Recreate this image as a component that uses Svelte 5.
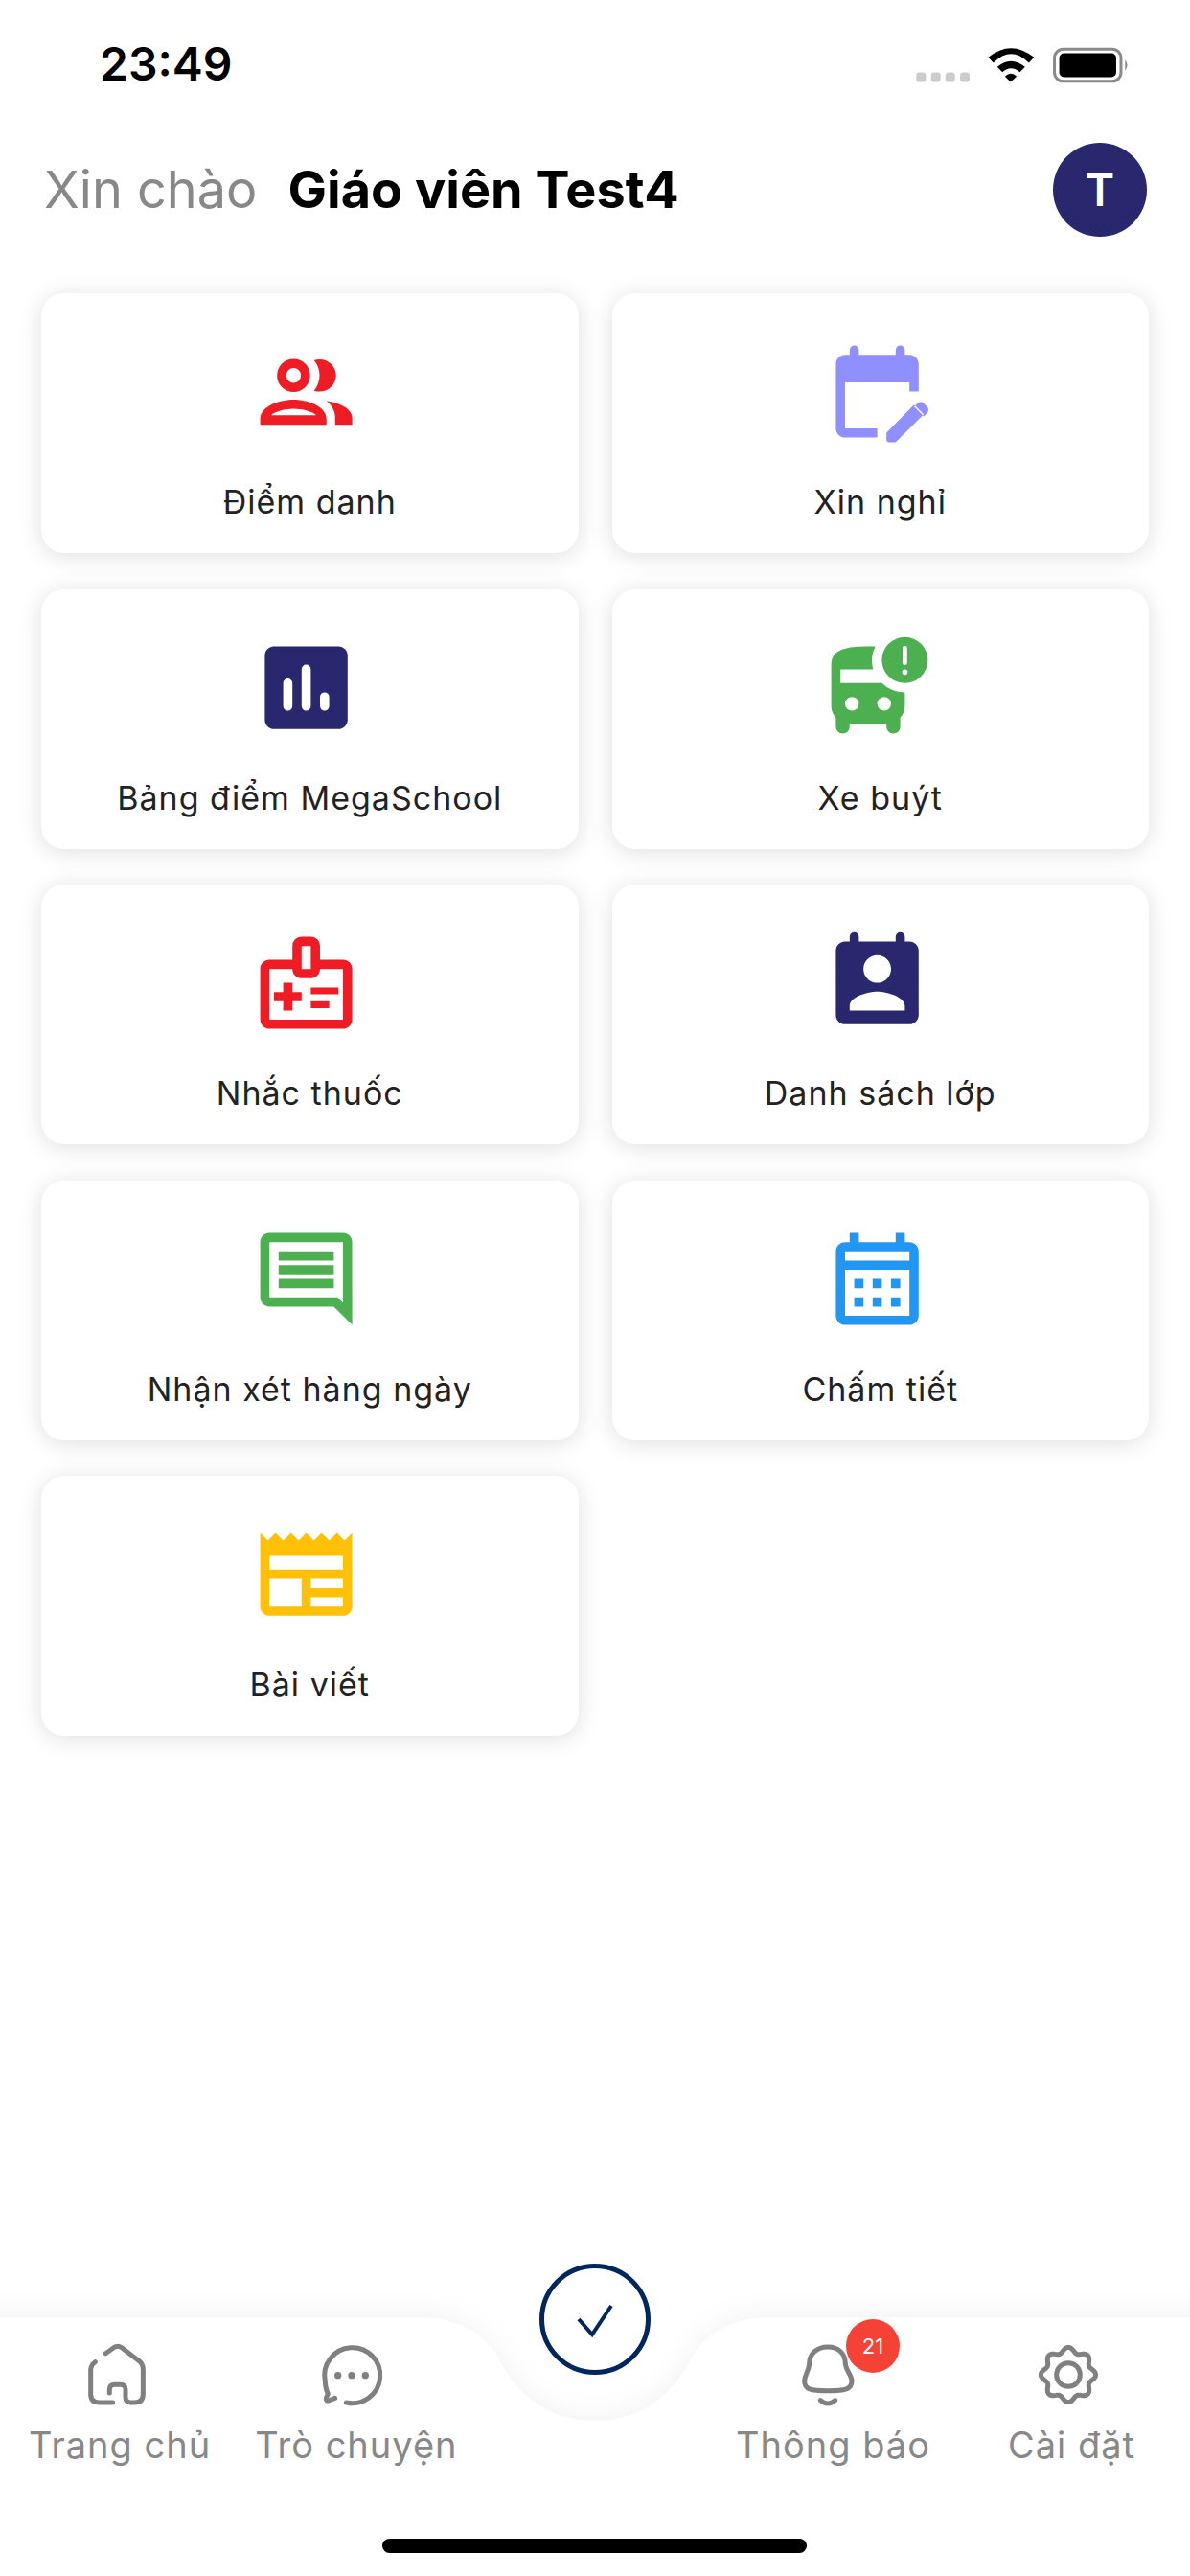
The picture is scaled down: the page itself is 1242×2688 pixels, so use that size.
<script>
  // Menu tiles: svg path per icon, drawn on a 24 unit box
  const tiles = [
    { label: "Điểm danh", color: "#ee1c25", icon: "people" },
    { label: "Xin nghỉ", color: "#8f8fff", icon: "edit" },
    { label: "Bảng điểm MegaSchool", color: "#29286f", icon: "chart" },
    { label: "Xe buýt", color: "#4caf50", icon: "bus" },
    { label: "Nhắc thuốc", color: "#ee1c25", icon: "medical" },
    { label: "Danh sách lớp", color: "#29286f", icon: "contact" },
    { label: "Nhận xét hàng ngày", color: "#4caf50", icon: "notes" },
    { label: "Chấm tiết", color: "#2196f3", icon: "calendar" },
    { label: "Bài viết", color: "#ffc107", icon: "news" },
  ];

  const icons = {
    people:
      "M9.25 4.9a3.6 3.6 0 1 0 0 7.2a3.6 3.6 0 1 0 0-7.2zM9.25 6.9a1.6 1.6 0 1 1 0 3.2a1.6 1.6 0 1 1 0-3.2zM14.9 5c2 0 3.6 1.6 3.6 3.5s-1.6 3.5-3.6 3.5c-.4 0-.8-.1-1.2-.2c.8-1 1.2-2.1 1.2-3.3s-.4-2.4-1.2-3.3c.4-.1.8-.2 1.2-.2zM9.25 13.75c-2.8 0-7.25 1.3-7.25 4.2v1.25h14.4v-1.25c0-2.9-4.4-4.2-7.15-4.2zM4.4 17.15c.7-.8 3-1.4 4.85-1.4s4.2.6 4.9 1.4zM16.4 14c2.5.4 5.6 1.5 5.6 3.8v1.4h-3.7v-1.6c0-1.4-.8-2.7-1.9-3.6z",
    edit:
      "M5 10h14v2h2V6c0-1.1-.9-2-2-2h-1V3a1 1 0 0 0-2 0v1H8V3a1 1 0 0 0-2 0v1H5C3.89 4 3.01 4.9 3.01 6L3 20c0 1.1.89 2 2 2h7v-2H5V10zM22.84 15.28l-.71-.71c-.39-.39-1.02-.39-1.41 0l-.71.71 2.12 2.12.71-.71c.39-.38.39-1.02 0-1.41zM14 20.94V22.4c0 .4.2.6.6.6h1.2c.2 0 .3-.1.4-.2l5.92-5.86-2.12-2.12L14 20.94z",
    chart:
      "M5 3h14c1.1 0 2 .9 2 2v14c0 1.1-.9 2-2 2H5c-1.1 0-2-.9-2-2V5c0-1.1.9-2 2-2zM8 10a1 1 0 0 0-1 1v5a1 1 0 0 0 2 0v-5a1 1 0 0 0-1-1zM12 7a1 1 0 0 0-1 1v8a1 1 0 0 0 2 0V8a1 1 0 0 0-1-1zM16 13a1 1 0 0 0-1 1v2a1 1 0 0 0 2 0v-2a1 1 0 0 0-1-1z",
    bus:
      "M11.6 3H10C5.6 3 2 3.5 2 7V16C2 17 2.4 17.9 3 18.5V20.5a1.5 1.5 0 0 0 3 0V20H14V20.5a1.5 1.5 0 0 0 3 0V18.5C17.6 17.9 18 17 18 16V13A7 7 0 0 1 13 11H4V8H11.1A7 7 0 0 1 11.6 3ZM6.5 14a1.5 1.5 0 1 1 0 3a1.5 1.5 0 1 1 0-3zM13.5 14a1.5 1.5 0 1 1 0 3a1.5 1.5 0 1 1 0-3zM18 1a5 5 0 1 0 0 10a5 5 0 1 0 0-10zM17.5 3.4a.5 .5 0 0 1 1 0V6.6a.5 .5 0 0 1-1 0zM18 8a.6 .6 0 1 1 0 1.2a.6 .6 0 1 1 0-1.2z",
    medical:
      "M20 7h-5V4c0-1.1-.9-2-2-2h-2C9.9 2 9 2.9 9 4v3H4c-1.1 0-2 .9-2 2v11c0 1.1.9 2 2 2h16c1.1 0 2-.9 2-2V9c0-1.1-.9-2-2-2zM11 4h2v5h-2V4zm9 16H4V9h5c0 1.1.9 2 2 2h2c1.1 0 2-.9 2-2h5v11zm-9-4H9v2H7v-2H5v-2h2v-2h2v2h2v2zm2-1.5V13h6v1.5h-6zm0 3V16h4v1.5h-4z",
    contact:
      "M19 3h-1V2a1 1 0 0 0-2 0v1H8V2a1 1 0 0 0-2 0v1H5c-1.11 0-2 .9-2 2v14c0 1.1.89 2 2 2h14c1.1 0 2-.9 2-2V5c0-1.1-.9-2-2-2zm-7 3c1.66 0 3 1.34 3 3s-1.34 3-3 3-3-1.34-3-3 1.34-3 3-3zm6 12H6v-1c0-2 4-3.1 6-3.1s6 1.1 6 3.1v1z",
    notes:
      "M21.99 4c0-1.1-.89-2-1.99-2H4c-1.1 0-2 .9-2 2v12c0 1.1.9 2 2 2h14l4 4-.01-18zM20 4v13.17L18.83 16H4V4h16zM6 12h12v2H6zm0-3h12v2H6zm0-3h12v2H6z",
    calendar:
      "M19 4h-1V2h-2v2H8V2H6v2H5c-1.11 0-1.99.9-1.99 2L3 20c0 1.1.89 2 2 2h14c1.1 0 2-.9 2-2V6c0-1.1-.9-2-2-2zm0 16H5V10h14v10zm0-12H5V6h14v2zM9 14H7v-2h2v2zm4 0h-2v-2h2v2zm4 0h-2v-2h2v2zm-8 4H7v-2h2v2zm4 0h-2v-2h2v2zm4 0h-2v-2h2v2z",
    news:
      "M22 3l-1.67 1.67L18.67 3 17 4.67 15.33 3l-1.66 1.67L12 3l-1.67 1.67L8.67 3 7 4.67 5.33 3 3.67 4.67 2 3v16c0 1.1.9 2 2 2h16c1.1 0 2-.9 2-2V3zM11 19H4v-6h7v6zm9 0h-7v-2h7v2zm0-4h-7v-2h7v2zm0-4H4V8h16v3z",
  };

  // gear outline: wavy ring with 8 lobes around (900,205)
  let gear = "";
  for (let i = 0; i < 96; i++) {
    const a = (i / 96) * Math.PI * 2;
    const r = 78 + 8 * Math.cos(8 * a);
    gear += (i ? "L" : "M") + (900 + r * Math.cos(a)).toFixed(1) + " " + (205 + r * Math.sin(a)).toFixed(1);
  }
  gear += "Z";
</script>

<div class="page">
  <div class="status">
    <span class="time">23:49</span>
    <svg class="status-icons" viewBox="40 50 680 125" aria-hidden="true">
      <rect x="50" y="135" width="30" height="30" rx="10" fill="#ccc" />
      <rect x="96" y="135" width="30" height="30" rx="10" fill="#ccc" />
      <rect x="141" y="135" width="30" height="30" rx="10" fill="#ccc" />
      <rect x="187" y="135" width="30" height="30" rx="10" fill="#ccc" />
      <path d="M275 88Q346 30 418 88L402 105Q346 50 291 105Z" />
      <path d="M303 118Q346 82 390 118L374 134Q346 110 319 134Z" />
      <path d="M327 148Q346 130 364 148L345 165Z" />
      <rect x="482" y="62" width="208" height="101" rx="28" fill="none" stroke="#8a8a8a" stroke-width="9" />
      <rect x="497" y="75" width="178" height="75" rx="15" />
      <path d="M703 95Q716 112 703 130Z" fill="#8a8a8a" />
    </svg>
  </div>

  <header class="header">
    <div class="greeting">
      <span class="hello">Xin chào</span>
      <span class="name">Giáo viên Test4</span>
    </div>
    <div class="avatar">T</div>
  </header>

  <main class="grid">
    {#each tiles as tile}
      <div class="tile">
        <svg class="tile-icon" viewBox="0 0 24 24" aria-hidden="true">
          <path d={icons[tile.icon]} fill={tile.color} fill-rule="evenodd" />
        </svg>
        <span class="tile-label">{tile.label}</span>
      </div>
    {/each}
  </main>

  <nav class="nav">
    <svg class="nav-bg" viewBox="0 0 1242 270" aria-hidden="true">
      <path d="M-40 0H436C475 0 505 15 520 42C535 72 565 108 621 108C677 108 707 72 722 42C737 15 767 0 806 0H1282V310H-40Z" fill="#fff" />
    </svg>

    <div class="check">
      <svg viewBox="0 0 60 60" aria-hidden="true">
        <path d="M13 30L27 46L47 16" fill="none" stroke="#00275d" stroke-width="4" stroke-linejoin="miter" />
      </svg>
    </div>

    <div class="nav-left">
      <div class="nav-item">
        <svg class="nav-icon shifted" viewBox="30 40 210 210" aria-hidden="true">
          <path d="M100 78L125 60Q137 52 150 60L205 102Q217 112 217 128V205Q217 232 190 232H178Q162 232 162 215V192Q162 176 146 176H128Q112 176 112 192V202M122 232H80Q53 232 53 205V130Q53 115 67 105" />
        </svg>
        <span class="nav-label">Trang chủ</span>
      </div>
      <div class="nav-item">
        <svg class="nav-icon shifted" viewBox="800 40 210 210" aria-hidden="true">
          <path d="M885 232A87 87 0 1 0 819 165Q820 190 828 205Q815 228 830 226L850 218" />
          <circle class="dot" cx="859" cy="147" r="11" />
          <circle class="dot" cx="902" cy="147" r="11" />
          <circle class="dot" cx="945" cy="147" r="11" />
        </svg>
        <span class="nav-label">Trò chuyện</span>
      </div>
    </div>

    <div class="nav-right">
      <div class="nav-item">
        <svg class="nav-icon" viewBox="40 100 210 210" aria-hidden="true">
          <path d="M130 118C95 118 72 140 72 170C72 190 57 205 57 225C57 250 75 255 130 255C185 255 205 250 205 225C205 205 185 190 185 170C185 140 165 118 130 118Z" />
          <path d="M107 285Q130 305 153 285" />
        </svg>
        <span class="badge">21</span>
        <span class="nav-label">Thông báo</span>
      </div>
      <div class="nav-item">
        <svg class="nav-icon shifted" viewBox="795 100 210 210" aria-hidden="true">
          <path d={gear} />
          <circle cx="900" cy="205" r="37" />
        </svg>
        <span class="nav-label">Cài đặt</span>
      </div>
    </div>

    <div class="home-bar"></div>
  </nav>
</div>

<style>
  :global(body) {
    margin: 0;
    background: #fff;
  }

  .page {
    width: 1242px;
    height: 2688px;
    display: flex;
    flex-direction: column;
    overflow: hidden;
    background: #fff;
    font-family: Inter, "Noto Sans", sans-serif;
  }

  /* --- status bar --- */
  .status {
    display: flex;
    justify-content: space-between;
    align-items: flex-start;
    box-sizing: border-box;
    height: 100px;
    padding: 47px 62px 0 104px;
  }

  .time {
    font-size: 48px;
    line-height: 40px;
    font-weight: 600;
    color: #000;
  }

  .status-icons {
    width: 227px;
    height: 42px;
  }

  /* --- greeting --- */
  .header {
    display: flex;
    justify-content: space-between;
    align-items: center;
    height: 99px;
    margin-top: 48px;
    padding: 0 45px 0 46px;
  }

  .greeting {
    display: flex;
    gap: 32px;
    font-size: 54px;
    line-height: 64px;
  }

  .hello {
    color: #888;
  }

  .name {
    color: #000;
    font-weight: 700;
  }

  .avatar {
    width: 98px;
    height: 98px;
    border-radius: 50%;
    background: #29286f;
    color: #fff;
    font-size: 46px;
    font-weight: 600;
    display: flex;
    align-items: center;
    justify-content: center;
  }

  /* --- tiles --- */
  .grid {
    display: grid;
    grid-template-columns: 1fr 1fr;
    grid-auto-rows: 271px;
    gap: 37.5px 35px;
    padding: 59px 43px 0;
  }

  .tile {
    display: flex;
    flex-direction: column;
    align-items: center;
    box-sizing: border-box;
    padding-top: 45px;
    background: #fff;
    border-radius: 24px;
    box-shadow: 0 3px 24px rgba(0, 0, 0, 0.13);
  }

  .tile-icon {
    width: 115.2px;
    height: 115.2px;
    margin-right: 7px;
    flex: none;
  }

  .tile-label {
    margin-top: 38px;
    font-size: 34px;
    line-height: 40px;
    letter-spacing: 1px;
    color: #222;
  }

  /* --- bottom navigation --- */
  .nav {
    position: relative;
    display: flex;
    justify-content: space-between;
    align-items: flex-start;
    box-sizing: border-box;
    height: 270px;
    margin-top: auto;
    padding: 25px 57px 0 30px;
  }

  .nav-bg {
    position: absolute;
    left: 0;
    top: 0;
    width: 1242px;
    height: 270px;
    overflow: visible;
    filter: drop-shadow(0 -3px 14px rgba(0, 0, 0, 0.05));
  }

  .check {
    position: absolute;
    left: 563px;
    top: -56px;
    box-sizing: border-box;
    width: 116px;
    height: 116px;
    border: 5px solid #00275d;
    border-radius: 50%;
    background: #fff;
    display: flex;
    align-items: center;
    justify-content: center;
  }

  .check svg {
    width: 60px;
    height: 60px;
  }

  .nav-left,
  .nav-right {
    position: relative;
    display: flex;
  }

  .nav-left {
    gap: 46px;
  }

  .nav-right {
    gap: 81px;
  }

  .nav-item {
    position: relative;
    display: flex;
    flex-direction: column;
    align-items: center;
  }

  .nav-icon {
    width: 70px;
    height: 70px;
    fill: none;
    stroke: #808080;
    stroke-width: 15;
    stroke-linecap: round;
    stroke-linejoin: round;
  }

  .nav-icon.shifted {
    margin-right: 7px;
  }

  .nav-icon .dot {
    fill: #808080;
    stroke: none;
  }

  .nav-label {
    margin-top: 15px;
    font-size: 38px;
    line-height: 46px;
    letter-spacing: 1px;
    color: #888;
    white-space: nowrap;
  }

  .badge {
    position: absolute;
    left: 115px;
    top: -23px;
    width: 56px;
    height: 56px;
    border-radius: 50%;
    background: #f44336;
    color: #fff;
    font-size: 22px;
    display: flex;
    align-items: center;
    justify-content: center;
  }

  .home-bar {
    position: absolute;
    left: 399px;
    bottom: 24px;
    width: 443px;
    height: 15px;
    border-radius: 8px;
    background: #000;
  }
</style>
